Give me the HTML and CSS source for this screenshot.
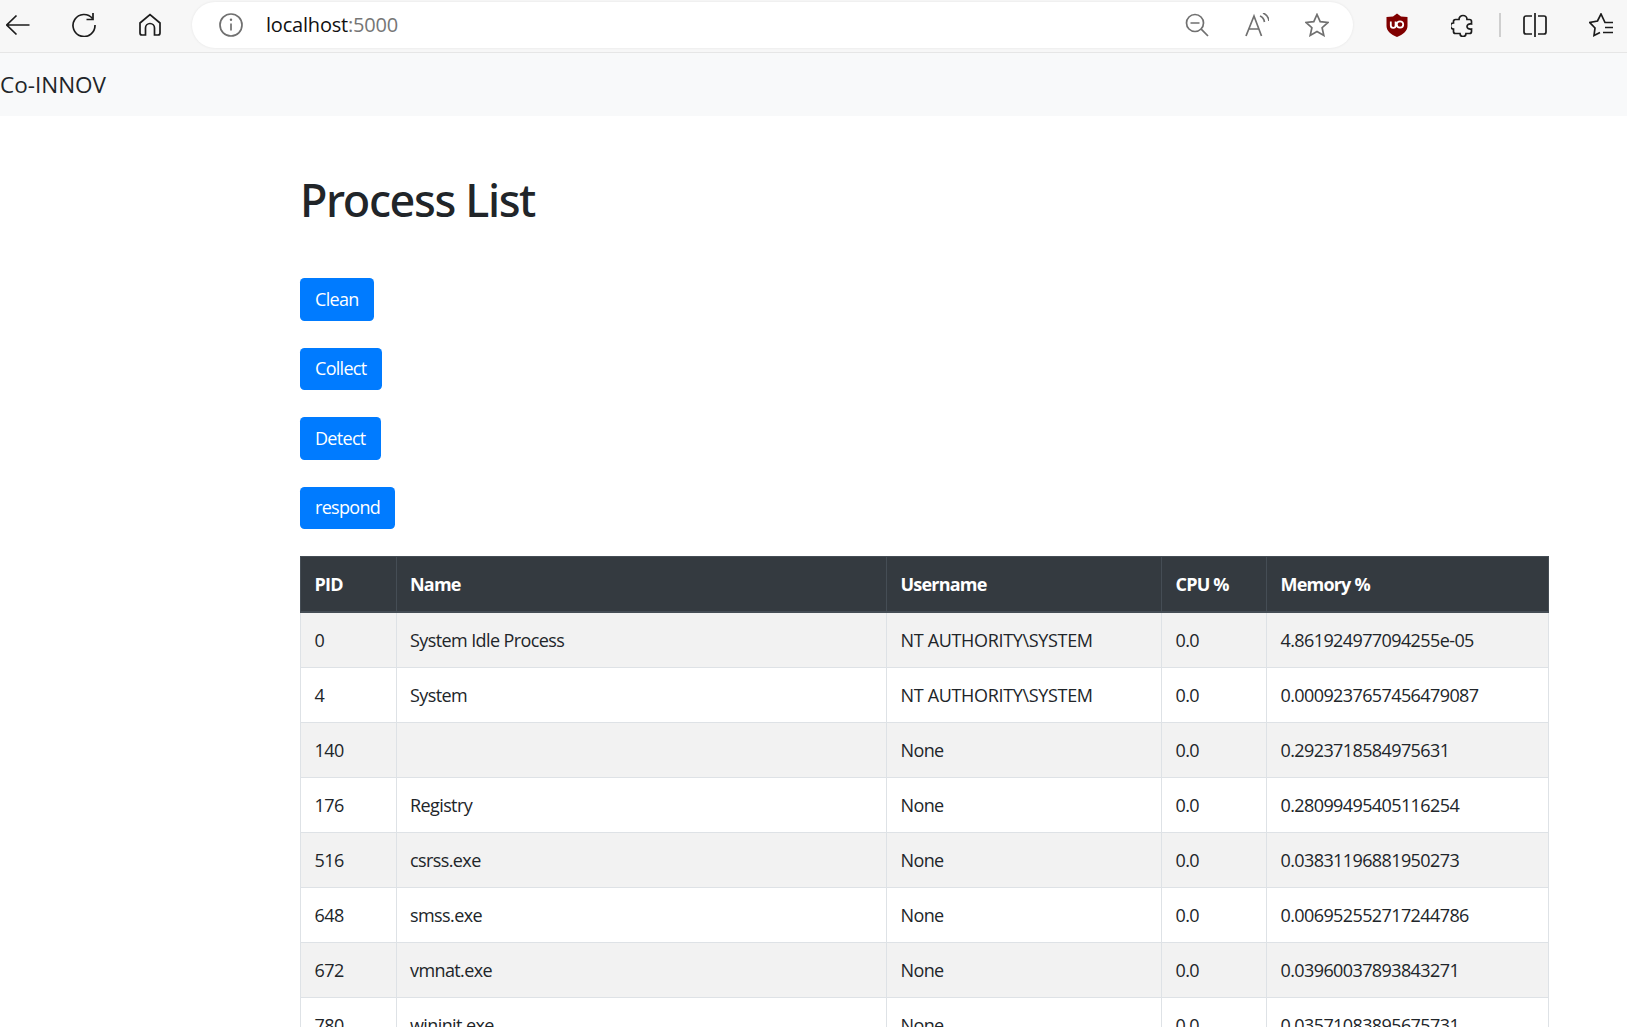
FILE: index.html
```html
<!DOCTYPE html>
<html lang="en">

<head>
    <meta charset="UTF-8">
    <title>Process List</title>
    <link rel="stylesheet" href="styles.css">
</head>

<body>
    <div class="toolbar">
        <div class="tool-group">
            <svg class="icon" viewBox="0 0 24 24"><path d="M23.500 12H.8M10.500 2.500L.8 12l9.700 9.500"/></svg>
            <svg class="icon" viewBox="0 0 24 24"><path d="M20.500 5.500A11 11 0 1 0 23 12"/><path d="M21 0v6.500h-6.500"/></svg>
            <svg class="icon" viewBox="0 0 24 24"><path d="M2 10L12 1.500 22 10v10a2 2 0 0 1-2 2h-3.500v-7a4.500 4.500 0 0 0-9 0v7H4a2 2 0 0 1-2-2z"/></svg>
        </div>
        <div class="address">
            <svg class="icon icon-grey" viewBox="0 0 24 24"><circle cx="12" cy="12" r="11"/><path d="M12 10.500v7"/><circle class="dot" cx="12" cy="6.800" r="1.200"/></svg>
            <span class="url">localhost<span class="port">:5000</span></span>
            <div class="address-actions">
                <svg class="icon icon-grey" viewBox="0 0 24 24"><circle cx="10" cy="10" r="8.500"/><path d="M5.500 10h9M16.200 16.200L23 23"/></svg>
                <svg class="icon icon-grey" viewBox="0 0 24 24"><path d="M1 23L9 3l7.500 20M4 16h10M15 3c2.500 1 4 3 4.500 6M18 0c3.500 1.500 5.500 4.500 6 8"/></svg>
                <svg class="icon icon-grey" viewBox="0 0 24 24"><path d="M12 1.500l3.200 7.200 7.800.8-5.900 5.200 1.700 7.700L12 18.400 5.200 22.400l1.700-7.700L1 9.500l7.800-.8z"/></svg>
            </div>
        </div>
        <div class="tool-group tool-group-right">
            <svg class="icon icon-shield" viewBox="0 0 24 24">
                <path class="shield" d="M12 .5L16 3.500 22.500 4v9c0 5-4.500 8.500-10.500 11C6 21.500 1.500 18 1.500 13V4L8 3.500z"/>
                <path class="shield-mark" d="M5.800 8.500v4a2.400 2.400 0 0 0 4.800 0v-4M11.800 11.500a3.200 3.200 0 1 0 6.400 0a3.200 3.200 0 1 0-6.400 0"/>
            </svg>
            <svg class="icon" viewBox="0 0 24 24"><path d="M4.500 6.500H8a4 4 0 0 1 8 0h2.500a2 2 0 0 1 2 2V11c-3-.6-4.500 1-4.500 2.500s1.500 3 4.500 2.500v2.500a2 2 0 0 1-2 2H15a3 3 0 0 1-6 0H4.500a2 2 0 0 1-2-2V16a3 3 0 0 1 0-6V8.500a2 2 0 0 1 2-2z"/></svg>
            <span class="divider"></span>
            <svg class="icon" viewBox="0 0 24 24"><path d="M9 3H3a2 2 0 0 0-2 2v14a2 2 0 0 0 2 2h6M15 3h6a2 2 0 0 1 2 2v14a2 2 0 0 1-2 2h-6M12 0v24"/></svg>
            <svg class="icon" viewBox="0 0 24 24"><path d="M24 9.500H16L12 1 8.500 8 .8 9.500 6 15l-1 7.500 6-3M16 14.500h8M14 19.500h10"/></svg>
        </div>
    </div>

    <nav class="navbar">Co-INNOV</nav>

    <div class="content">
        <h1 class="title">Process List</h1>

        <div class="actions">
            <button class="btn">Clean</button>
            <button class="btn">Collect</button>
            <button class="btn">Detect</button>
            <button class="btn">respond</button>
        </div>

        <table class="process-table">
            <thead>
                <tr>
                    <th class="col-pid">PID</th>
                    <th class="col-name">Name</th>
                    <th class="col-user">Username</th>
                    <th class="col-cpu">CPU %</th>
                    <th>Memory %</th>
                </tr>
            </thead>
            <tbody>
                <tr><td>0</td><td>System Idle Process</td><td class="caps">NT AUTHORITY\SYSTEM</td><td>0.0</td><td>4.861924977094255e-05</td></tr>
                <tr><td>4</td><td>System</td><td class="caps">NT AUTHORITY\SYSTEM</td><td>0.0</td><td>0.0009237657456479087</td></tr>
                <tr><td>140</td><td></td><td>None</td><td>0.0</td><td>0.2923718584975631</td></tr>
                <tr><td>176</td><td>Registry</td><td>None</td><td>0.0</td><td>0.28099495405116254</td></tr>
                <tr><td>516</td><td>csrss.exe</td><td>None</td><td>0.0</td><td>0.03831196881950273</td></tr>
                <tr><td>648</td><td>smss.exe</td><td>None</td><td>0.0</td><td>0.006952552717244786</td></tr>
                <tr><td>672</td><td>vmnat.exe</td><td>None</td><td>0.0</td><td>0.03960037893843271</td></tr>
                <tr><td>780</td><td>wininit.exe</td><td>None</td><td>0.0</td><td>0.03571083895675731</td></tr>
            </tbody>
        </table>
    </div>
</body>

</html>
```

FILE: styles.css
```css
* {
    margin: 0;
    padding: 0;
    box-sizing: border-box;
}

html,
body {
    height: 100%;
    overflow: hidden;
}

body {
    font-family: "Open Sans", "Noto Sans", sans-serif;
    font-size: 18px;
    line-height: 27px;
    color: #212529;
    background-color: #fff;
}

.toolbar {
    display: flex;
    align-items: center;
    height: 53px;
    padding-bottom: 2px;
    background-color: #f7f7f7;
    border-bottom: 1px solid #e6e6e6;
}

.tool-group {
    display: flex;
    align-items: center;
    gap: 42px;
    padding-left: 6px;
}

.tool-group-right {
    padding-left: 32px;
}

.icon {
    display: block;
    flex: none;
    width: 24px;
    height: 24px;
    fill: none;
    stroke: #1c1c1c;
    stroke-width: 1.7;
}

.icon-grey {
    stroke: #707070;
}

.icon-grey .dot {
    fill: #707070;
    stroke: none;
}

.shield {
    fill: #800000;
    stroke: none;
}

.shield-mark {
    stroke: #fff;
    stroke-width: 1.8;
}

.divider {
    flex: none;
    width: 2px;
    height: 24px;
    margin: 0 -20px 0 -18px;
    background-color: #cfcfcf;
}

.address {
    display: flex;
    align-items: center;
    width: 1161px;
    height: 46px;
    margin-left: 30px;
    padding: 0 24px 0 27px;
    background-color: #fff;
    border-radius: 23px;
    box-shadow: 0 0 3px rgba(0, 0, 0, .08);
}

.url {
    margin-left: 23px;
    margin-bottom: 2px;
    font-size: 20px;
    letter-spacing: -.2px;
    color: #111;
}

.port {
    color: #767676;
}

.address-actions {
    display: flex;
    gap: 36px;
    margin-left: auto;
}

.navbar {
    height: 63px;
    padding-top: 18px;
    font-size: 22.5px;
    letter-spacing: 0;
    background-color: #f8f9fa;
}

.content {
    width: 1249px;
    margin-left: 300px;
}

.title {
    margin-top: 57px;
    font-family: "Noto Sans", sans-serif;
    font-size: 45px;
    line-height: 54px;
    font-weight: 500;
    letter-spacing: -1.4px;
}

.actions {
    display: flex;
    flex-direction: column;
    align-items: flex-start;
    gap: 27px;
    margin-top: 51px;
}

.btn {
    height: 42.500px;
    padding: 0 15px 1px;
    font-family: inherit;
    font-size: 18px;
    letter-spacing: -.7px;
    color: #fff;
    background-color: #007bff;
    border: none;
    border-radius: 4.500px;
}

.process-table {
    width: 100%;
    margin-top: 27px;
    table-layout: fixed;
    border-collapse: collapse;
    letter-spacing: -.6px;
}

.process-table th,
.process-table td {
    padding: 13.500px 13px 13.500px 13.500px;
    text-align: left;
    vertical-align: top;
    border: 1px solid #dee2e6;
}

.process-table th:nth-child(2),
.process-table td:nth-child(2) {
    padding-left: 13px;
}

.process-table th {
    color: #fff;
    font-weight: 700;
    letter-spacing: -.8px;
    background-color: #343a40;
    border-color: #454d55;
    border-bottom-width: 2px;
}

.process-table tbody tr:nth-child(odd) {
    background-color: #f2f2f2;
}

.process-table .caps {
    letter-spacing: -.33px;
}

.col-pid {
    width: 96px;
}

.col-name {
    width: 490px;
}

.col-user {
    width: 275px;
}

.col-cpu {
    width: 105px;
}
```
